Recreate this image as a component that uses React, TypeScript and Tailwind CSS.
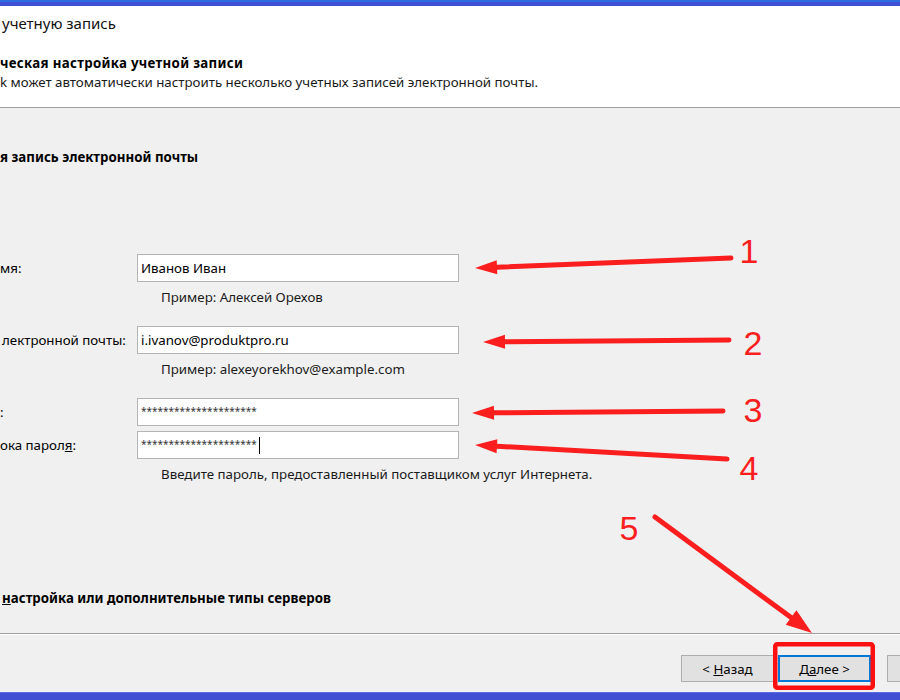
import React from 'react';

// Red callout arrow: a thick stroke ending in a filled triangular head at (x2, y2).
const Arrow: React.FC<{ x1: number; y1: number; x2: number; y2: number; len?: number; half?: number }> = ({
  x1,
  y1,
  x2,
  y2,
  len = 22,
  half = 7,
}) => {
  const dx = x1 - x2;
  const dy = y1 - y2;
  const d = Math.hypot(dx, dy);
  const ux = dx / d;
  const uy = dy / d;
  const bx = x2 + ux * len;
  const by = y2 + uy * len;
  const px = -uy * half;
  const py = ux * half;
  return (
    <g>
      <line x1={x1} y1={y1} x2={bx} y2={by} stroke="#fa1e1e" strokeWidth={5} strokeLinecap="round" />
      <polygon points={`${x2},${y2} ${bx + px},${by + py} ${bx - px},${by - py}`} fill="#fa1e1e" />
    </g>
  );
};

const Field: React.FC<{ label: React.ReactNode; children: React.ReactNode; className?: string }> = ({
  label,
  children,
  className = '',
}) => (
  <div className={`flex items-center ${className}`}>
    <div className="w-[137px] shrink-0 whitespace-nowrap leading-[16px]">{label}</div>
    <div className="w-[322px] h-[28px] bg-white border border-[#b4b4b4] flex items-center pl-[3px] overflow-hidden">
      {children}
    </div>
  </div>
);

const Hint: React.FC<{ children: React.ReactNode }> = ({ children }) => (
  <div className="pl-[161px] mt-[7px] leading-[16px] text-[#1a1a1a] whitespace-nowrap">{children}</div>
);

const App: React.FC = () => {
  const stars = '*********************';

  return (
    <div className="relative w-[900px] h-[700px] overflow-hidden bg-[#f0f0f0] text-[13.3px] text-black font-['Noto_Sans','Open_Sans',sans-serif]">
      <div className="w-[990px] flex flex-col">
        {/* window frame top */}
        <div className="h-[6px] bg-[#3f4ed2] border-t-2 border-[#2d6be0]" />

        {/* wizard header */}
        <div className="h-[102px] bg-white border-b border-[#a0a0a0] pl-[2px]">
          <div className="pt-[7px] text-[15px] leading-[20px] text-[#111]">учетную запись</div>
          <div className="mt-[22px] font-bold leading-[16px] -ml-[2px] tracking-[0.3px]">
            ческая настройка учетной записи
          </div>
          <div className="mt-[3px] leading-[16px] -ml-[2px] text-[#1a1a1a]">
            k может автоматически настроить несколько учетных записей электронной почты.
          </div>
        </div>

        {/* form body */}
        <div className="h-[526px] border-b border-[#a0a0a0]">
          <div className="pt-[41px] font-bold leading-[16px]">я запись электронной почты</div>

          <Field label="мя:" className="mt-[89px]">
            <span className="leading-[16px]">Иванов Иван</span>
          </Field>
          <Hint>Пример: Алексей Орехов</Hint>

          <Field label={<span className="pl-[2px]">лектронной почты:</span>} className="mt-[21px]">
            <span className="leading-[16px]">i.ivanov@produktpro.ru</span>
          </Field>
          <Hint>Пример: alexeyorekhov@example.com</Hint>

          <Field label=":" className="mt-[21px]">
            <span className="text-[10px] leading-[16px] -mt-[3px] text-[#333]">{stars}</span>
          </Field>
          <Field
            label={
              <span>
                ока парол<span className="underline">я</span>:
              </span>
            }
            className="mt-[5px]"
          >
            <span className="text-[10px] leading-[16px] -mt-[3px] text-[#333]">{stars}</span>
            <span className="ml-[2px] w-px h-[17px] bg-black" />
          </Field>
          <Hint>Введите пароль, предоставленный поставщиком услуг Интернета.</Hint>

          <div className="mt-[108px] pl-[2px] font-bold leading-[16px]">
            <span className="underline">н</span>астройка или дополнительные типы серверов
          </div>
        </div>

        {/* wizard buttons */}
        <div className="h-[58px] bg-[#f0f0f0] border-t border-white flex justify-end items-start pt-[20px] pr-[10px]">
          <button className="w-[93px] h-[27px] bg-[#e1e1e1] border border-[#adadad] leading-[16px]">
            &lt; <span className="underline">Н</span>азад
          </button>
          <button className="ml-[4px] w-[93px] h-[27px] bg-[#e1e1e1] border-2 border-[#0078d7] leading-[16px]">
            Д<span className="underline">а</span>лее &gt;
          </button>
          <button className="ml-[16px] w-[93px] h-[27px] bg-[#e1e1e1] border border-[#adadad]" />
        </div>

        {/* window frame bottom */}
        <div className="h-[8px] bg-[#3f4ed2] border-t border-[#5a6ae0]" />
      </div>

      {/* callouts */}
      <svg className="absolute inset-0 pointer-events-none" width={900} height={700} viewBox="0 0 900 700">
        <Arrow x1={731} y1={258} x2={475} y2={268} />
        <Arrow x1={729} y1={340} x2={483} y2={342} />
        <Arrow x1={723} y1={411} x2={472} y2={413} />
        <Arrow x1={727} y1={459} x2={475} y2={445} />
        <Arrow x1={655} y1={517} x2={812} y2={633} len={26} half={9} />
        <rect x={775.25} y={644.25} width={97.5} height={43.5} rx={2} fill="none" stroke="#ff1010" strokeWidth={4.5} />
        <g fill="#fa1e1e" fontFamily="'Liberation Sans', Arial, sans-serif" fontSize={34} textAnchor="middle">
          <text x={749} y={263}>1</text>
          <text x={753} y={355}>2</text>
          <text x={753} y={422}>3</text>
          <text x={749} y={480}>4</text>
          <text x={629} y={540}>5</text>
        </g>
      </svg>
    </div>
  );
};

export default App;
